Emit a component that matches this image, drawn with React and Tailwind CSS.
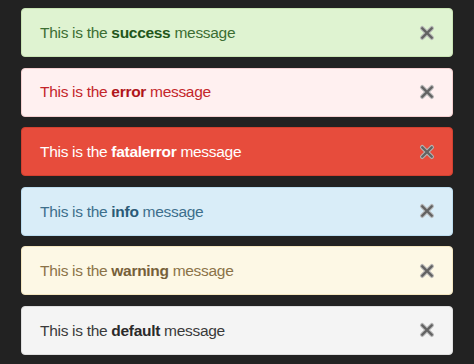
import React from "react";

function CloseIcon() {
  return (
    <svg width="16" height="16" viewBox="0 0 16 16" className="shrink-0">
      <path d="M3.2 3.2 L12.8 12.8 M12.8 3.2 L3.2 12.8" stroke="#b4b4b4" strokeWidth="4.4" strokeLinecap="round" fill="none" />
      <path d="M3.2 3.2 L12.8 12.8 M12.8 3.2 L3.2 12.8" stroke="#626262" strokeWidth="2.3" strokeLinecap="round" fill="none" />
    </svg>
  );
}

const items = [
  { word: "success", box: "bg-[#dff3d1] border-[#c9e4b4] text-[#3c6e33]", bold: "text-[#22561a]" },
  { word: "error", box: "bg-[#fff0f0] border-[#f3cfcf] text-[#c4262b]", bold: "text-[#b0151b]" },
  { word: "fatalerror", box: "bg-[#e74c3c] border-[#d2402f] text-white", bold: "text-white" },
  { word: "info", box: "bg-[#d9edf8] border-[#bcdcee] text-[#3d6f8c]", bold: "text-[#2b5a76]" },
  { word: "warning", box: "bg-[#fdf8e5] border-[#f3e6c0] text-[#8b7348]", bold: "text-[#76603a]" },
  { word: "default", box: "bg-[#f4f4f4] border-[#dedede] text-[#3a3a3a]", bold: "text-[#2a2a2a]" },
];

export default function App() {
  return (
    <div
      className="w-[474px] h-[364px] bg-[#222222] pt-[8px] pl-[21px] flex flex-col gap-[10.6px]"
      style={{ fontFamily: '"Liberation Sans", Arial, sans-serif' }}
    >
      {items.map((it) => (
        <div
          key={it.word}
          className={`w-[432px] h-[49px] border rounded-[4px] flex items-center justify-between pl-[18px] pr-[17px] text-[15.5px] tracking-[-0.3px] ${it.box}`}
        >
          <span>
            This is the <b className={`font-bold ${it.bold}`}>{it.word}</b> message
          </span>
          <CloseIcon />
        </div>
      ))}
    </div>
  );
}
